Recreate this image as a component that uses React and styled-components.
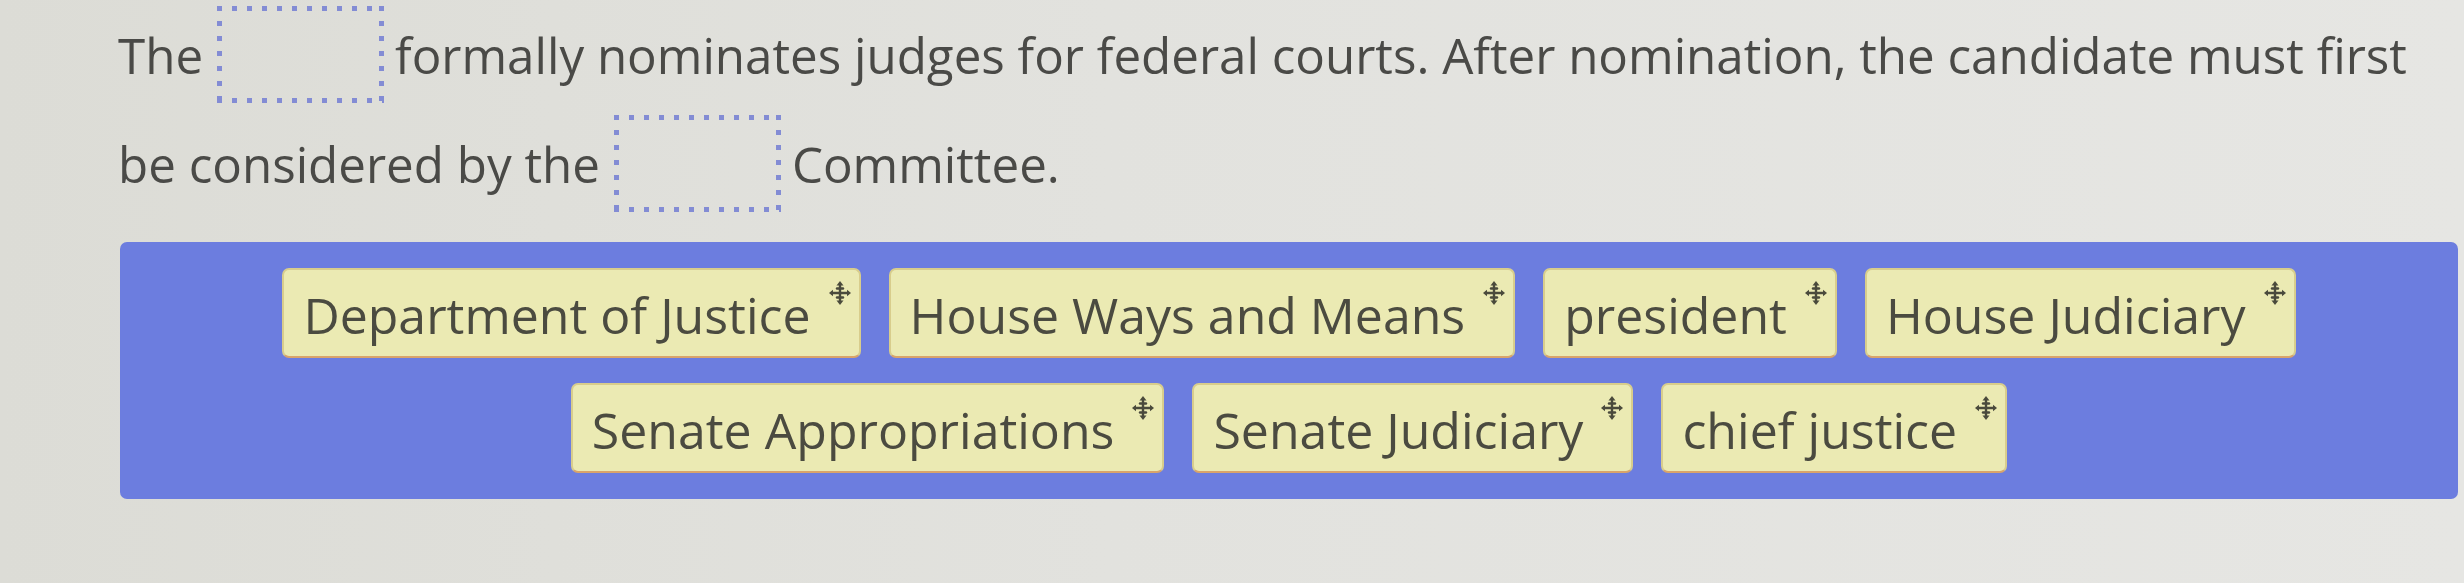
import React from 'react';
import styled, { createGlobalStyle } from 'styled-components';

const GlobalStyle = createGlobalStyle`
  html, body {
    margin: 0;
    padding: 0;
  }
  body {
    width: 2464px;
    height: 583px;
    overflow: hidden;
    background: linear-gradient(90deg, #dcdcd6 0%, #e2e2de 45%, #e6e6e3 100%);
    font-family: "Open Sans", "Liberation Sans", sans-serif;
  }
`;

const choices = [
  'Department of Justice',
  'House Ways and Means',
  'president',
  'House Judiciary',
  'Senate Appropriations',
  'Senate Judiciary',
  'chief justice',
];

// four-way "drag me" handle shown on every answer tile
const MoveIcon = () => (
  <svg width="22" height="24" viewBox="0 0 22 24" fill="none">
    <g stroke="#4a4a3c" strokeWidth="2.4" strokeLinecap="round">
      <line x1="11" y1="4" x2="11" y2="20" />
      <line x1="3" y1="12" x2="19" y2="12" />
      <line x1="8" y1="7.5" x2="14" y2="7.5" />
      <line x1="8" y1="16.5" x2="14" y2="16.5" />
    </g>
    <g fill="#4a4a3c">
      <path d="M11 0 L14.5 4.5 L7.5 4.5 Z" />
      <path d="M11 24 L14.5 19.5 L7.5 19.5 Z" />
      <path d="M0 12 L4 8.8 L4 15.2 Z" />
      <path d="M22 12 L18 8.8 L18 15.2 Z" />
    </g>
  </svg>
);

const App = () => (
  <>
    <GlobalStyle />
    <Page>
      <Question>
        <Line>
          <Words>The</Words>
          <Blank />
          <Words>formally nominates judges for federal courts. After nomination, the candidate must first</Words>
        </Line>
        <Line>
          <Words>be considered by the</Words>
          <Blank />
          <Words>Committee.</Words>
        </Line>
      </Question>
      <Bank>
        {choices.map((c) => (
          <Chip key={c}>
            <ChipText>{c}</ChipText>
            <Handle>
              <MoveIcon />
            </Handle>
          </Chip>
        ))}
      </Bank>
    </Page>
  </>
);

export default App;

const Page = styled.div`
  padding: 6px 6px 0 118px;
`;

const Question = styled.div`
  display: flex;
  flex-direction: column;
  gap: 12px;
  color: #4a4a47;
  font-size: 49.3px;
`;

const Line = styled.div`
  display: flex;
  align-items: center;
  white-space: nowrap;
`;

const Words = styled.span`
  line-height: normal;
`;

const dot = '#838cd4';

const Blank = styled.span`
  flex: none;
  width: 167px;
  height: 97px;
  margin: 0 11px 0 14px;
  background:
    linear-gradient(90deg, ${dot} 5px, transparent 5px) 0 0 / 15px 5px repeat-x,
    linear-gradient(90deg, ${dot} 5px, transparent 5px) 0 100% / 15px 5px repeat-x,
    linear-gradient(180deg, ${dot} 5px, transparent 5px) 0 0 / 5px 15px repeat-y,
    linear-gradient(180deg, ${dot} 5px, transparent 5px) 100% 0 / 5px 15px repeat-y;
`;

const Bank = styled.div`
  margin: 30px 0 0 2px;
  padding: 26px 25px;
  background: #6c7ddf;
  border-radius: 7px;
  display: flex;
  flex-wrap: wrap;
  justify-content: center;
  gap: 25px 28px;
`;

const Chip = styled.div`
  display: flex;
  align-items: center;
  height: 90px;
  box-sizing: border-box;
  padding: 0 8px 0 19px;
  background: #ebeab3;
  border: 2px solid #d8cd8c;
  border-bottom-color: #d9a46a;
  border-radius: 7px;
  color: #4b4b40;
  font-size: 50px;
`;

const ChipText = styled.span`
  line-height: 1;
  padding-top: 4px;
`;

const Handle = styled.span`
  align-self: flex-start;
  margin: 11px 0 0 18px;
  display: flex;
`;
